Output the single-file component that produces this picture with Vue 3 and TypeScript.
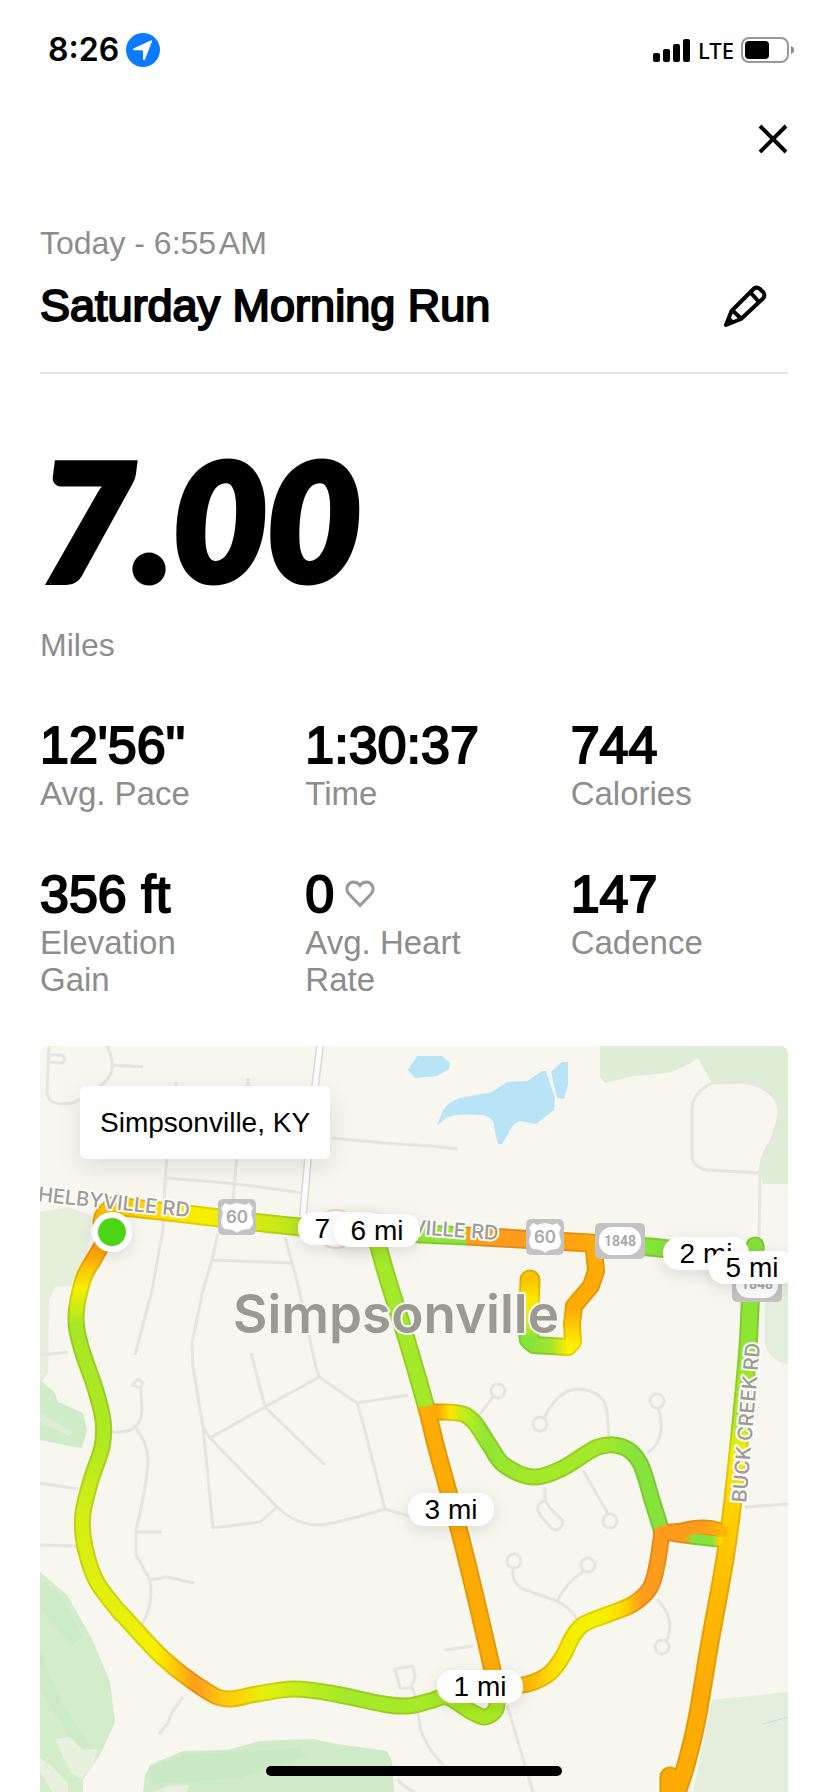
<script setup lang="ts">
type Point = [number, number]
type Stop = [number, string]

interface Segment {
  id: string
  points: Point[]
  axis: 'x' | 'y'
  stops: Stop[]
  width: number
  straight?: boolean
}

interface Stat {
  value: string
  label: string
  heart?: boolean
}

interface Pin {
  label: string
  x: number
  y: number
}

const stats: Stat[] = [
  { value: "12'56''", label: 'Avg. Pace' },
  { value: '1:30:37', label: 'Time' },
  { value: '744', label: 'Calories' },
  { value: '356 ft', label: 'Elevation Gain' },
  { value: '0', label: 'Avg. Heart Rate', heart: true },
  { value: '147', label: 'Cadence' },
]

const pins: Pin[] = [
  { label: '7 mi', x: 341, y: 1229 },
  { label: '6 mi', x: 377, y: 1231 },
  { label: '2 mi', x: 706, y: 1254 },
  { label: '5 mi', x: 752, y: 1268 },
  { label: '3 mi', x: 451, y: 1510 },
  { label: '1 mi', x: 480, y: 1687 },
]

const GREEN = '#a4e929'
const BRIGHT = '#86e33b'
const LIME = '#c2ee1c'
const YELLOW = '#f6f000'
const GOLD = '#ffd400'
const ORANGE = '#ffab05'
const DEEP = '#ff9c1c'

const segments: Segment[] = [
  {
    id: 'west', axis: 'y', width: 17,
    points: [[104, 1242], [94, 1259], [83, 1280], [76, 1317], [81, 1347], [95, 1388], [103, 1420], [102, 1447], [91, 1480], [83, 1513], [83, 1535], [88, 1559], [98, 1584], [121, 1614]],
    stops: [[1242, DEEP], [1258, ORANGE], [1288, YELLOW], [1325, '#a8e626'], [1440, '#aeea22'], [1510, '#d2ee14'], [1614, '#e6f00c']],
  },
  {
    id: 'south', axis: 'x', width: 17,
    points: [[120, 1612], [163, 1658], [205, 1690], [227, 1699], [257, 1694], [293, 1689], [330, 1693], [383, 1704], [407, 1706], [430, 1701], [447, 1697], [470, 1711], [485, 1717], [496, 1709], [497, 1692]],
    stops: [[120, '#e6f00c'], [155, YELLOW], [170, GOLD], [195, DEEP], [222, '#ffc810'], [240, GOLD], [262, '#e6f00c'], [300, LIME], [345, GREEN], [500, '#aaea22']],
  },
  {
    id: 'corner', axis: 'y', width: 17,
    points: [[118, 1207], [107, 1210], [101, 1221], [104, 1240]],
    stops: [[1205, '#f9c400'], [1240, DEEP]],
  },
  {
    id: 'shelbyville', axis: 'x', width: 19,
    points: [[112, 1206], [160, 1211], [300, 1227], [380, 1232], [467, 1236], [590, 1243], [650, 1247], [690, 1252], [755, 1262]],
    stops: [[112, '#f9c400'], [170, '#ffe200'], [205, YELLOW], [250, '#dcec0c'], [300, '#b4e620'], [380, GREEN], [466, BRIGHT], [467, DEEP], [540, DEEP], [600, ORANGE], [640, ORANGE], [641, BRIGHT], [760, BRIGHT]],
  },
  {
    id: 'spur-a', axis: 'y', width: 18, straight: true,
    points: [[594, 1250], [596, 1271], [591, 1286], [574, 1306], [572, 1324], [573, 1342], [568, 1347]],
    stops: [[1250, ORANGE], [1308, ORANGE], [1345, '#ffee00']],
  },
  {
    id: 'spur-b', axis: 'x', width: 18, straight: true,
    points: [[568, 1347], [534, 1345], [528, 1340]],
    stops: [[528, BRIGHT], [550, '#9fe52e'], [568, '#ffee00']],
  },
  {
    id: 'spur-c', axis: 'y', width: 21, straight: true,
    points: [[529, 1338], [529, 1310], [530, 1280]],
    stops: [[1280, '#f8c400'], [1298, '#ffe600'], [1318, '#e6ee0c'], [1338, BRIGHT]],
  },
  {
    id: 'diagonal', axis: 'y', width: 18,
    points: [[378, 1245], [388, 1280], [408, 1344], [427, 1410], [437, 1450], [460, 1534], [477, 1603], [497, 1690]],
    stops: [[1245, GREEN], [1405, GREEN], [1409, ORANGE], [1690, ORANGE]],
  },
  {
    id: 'east', axis: 'y', width: 19,
    points: [[755, 1248], [751, 1290], [748, 1347], [742, 1413], [733, 1500], [725, 1559], [710, 1642], [697, 1719], [686, 1765], [676, 1795]],
    stops: [[1245, BRIGHT], [1340, '#90e532'], [1425, '#b4ea20'], [1450, '#f0ee04'], [1490, '#ffd800'], [1600, '#ffb800'], [1700, ORANGE]],
  },
  {
    id: 'connector', axis: 'x', width: 17,
    points: [[429, 1412], [445, 1412], [463, 1414], [475, 1423], [490, 1446], [504, 1465], [533, 1477], [563, 1468], [598, 1447], [623, 1447], [640, 1463], [652, 1500], [661, 1529]],
    stops: [[427, ORANGE], [438, ORANGE], [450, '#ffe400'], [464, LIME], [485, '#92e534'], [530, GREEN], [605, GREEN], [635, BRIGHT], [661, BRIGHT]],
  },
  {
    id: 'link-low', axis: 'x', width: 13,
    points: [[664, 1534], [692, 1538], [719, 1541]],
    stops: [[664, DEEP], [684, DEEP], [694, BRIGHT], [712, BRIGHT], [720, GOLD]],
  },
  {
    id: 'link', axis: 'x', width: 16,
    points: [[661, 1532], [678, 1531], [695, 1528], [710, 1528], [722, 1531]],
    stops: [[661, DEEP], [700, DEEP], [722, '#ffb40a']],
  },
  {
    id: 'return', axis: 'x', width: 17,
    points: [[662, 1532], [657, 1565], [650, 1588], [633, 1604], [609, 1614], [584, 1624], [573, 1636], [563, 1656], [550, 1673], [531, 1683], [510, 1687]],
    stops: [[510, ORANGE], [535, '#ffbe08'], [555, '#ffe000'], [572, '#f2f000'], [605, '#f6f000'], [625, GOLD], [642, DEEP], [662, DEEP]],
  },
]

/* Catmull-Rom spline through the points, written as cubic segments. */
function trace(points: Point[], straight = false): string {
  let d = `M${points[0][0]} ${points[0][1]}`
  for (let i = 0; i < points.length - 1; i++) {
    const b = points[i]
    const c = points[i + 1]
    if (straight) {
      d += `L${c[0]} ${c[1]}`
      continue
    }
    const a = points[i - 1] ?? b
    const e = points[i + 2] ?? c
    const p = [b[0] + (c[0] - a[0]) / 6, b[1] + (c[1] - a[1]) / 6]
    const q = [c[0] - (e[0] - b[0]) / 6, c[1] - (e[1] - b[1]) / 6]
    d += `C${p[0].toFixed(1)} ${p[1].toFixed(1)} ${q[0].toFixed(1)} ${q[1].toFixed(1)} ${c[0]} ${c[1]}`
  }
  return d
}

const route = segments.map((s) => {
  const lo = s.stops[0][0]
  const hi = s.stops[s.stops.length - 1][0]
  return {
    id: s.id,
    width: s.width,
    d: trace(s.points, s.straight),
    x1: s.axis === 'x' ? lo : 0,
    x2: s.axis === 'x' ? hi : 0,
    y1: s.axis === 'y' ? lo : 0,
    y2: s.axis === 'y' ? hi : 0,
    stops: s.stops.map(([at, color]) => ({ offset: (at - lo) / (hi - lo), color })),
  }
})

const streets: string[] = [
  'M49 1046L47 1092Q48 1104 62 1104Q74 1104 80 1099M107 1046Q116 1066 110 1075Q106 1082 98 1088M112 1065L143 1067M49 1055L62 1055Q68 1059 62 1063L49 1062',
  'M176 1082V1090M248 1078V1090M167 1155L165 1183L163 1230L152 1290L135 1355M237 1155L233 1200M167 1178L237 1184L303 1193',
  'M332 1138L383 1143L430 1146L458 1149',
  'M218 1233L212 1260L203 1290L192 1343L193 1367L203 1427L213 1528L260 1522L277 1507M212 1260L292 1263M285 1237L292 1263L298 1285L315 1363L319 1377L357 1403L363 1423L385 1509',
  'M203 1427L210 1438L277 1507Q297 1526 322 1525Q345 1521 385 1509L412 1517M210 1438L265 1407L319 1377M251 1353L265 1407L325 1465M357 1403L408 1395',
  'M112 1432Q128 1433 135 1427Q142 1420 142 1410L141 1388L132 1385L138 1379L143 1383L141 1388M135 1427Q149 1445 148 1462Q146 1490 136 1530V1555L150 1580Q154 1605 142 1624M136 1532H162M150 1580L167 1577L194 1583',
  'M40 1355L68 1352M40 1483L78 1489M40 1545L78 1546',
  'M183 1697L172 1712L168 1723L159 1734',
  'M395 1669L413 1666L415 1677L411 1688H400ZM413 1688L419 1719Q420 1740 443 1765M397 1779Q404 1788 415 1792',
  'M507 1705L533 1792M445 1650L473 1646',
  'M513 1568Q511 1583 523 1589L557 1601Q569 1607 577 1619M584 1571Q567 1582 557 1601M666 1642Q677 1620 657 1599',
  'M493 1397L480 1414M544 1418Q558 1389 579 1389Q605 1391 607 1412L609 1437M658 1407Q668 1440 647 1453',
  'M545 1487V1500M545 1500Q534 1505 540 1515L552 1529Q562 1532 563 1521L550 1508ZM583 1470L608 1514',
  'M745 1507L788 1504',
  'M759 1242L760 1173L707 1170Q692 1167 692 1155V1107Q694 1092 712 1083L745 1082Q779 1090 779 1112Q778 1125 770 1143Q761 1155 760 1173',
]

const culDeSacs: Point[] = [[514, 1561], [588, 1565], [662, 1647], [498, 1391], [540, 1424], [657, 1401], [610, 1521]]
</script>

<template>
  <div class="screen">
    <div class="status">
      <div class="status-side">
        <span class="clock">8:26</span>
        <svg class="location" viewBox="0 0 34 34" aria-hidden="true">
          <circle cx="17" cy="17" r="17" fill="#0a7bff" />
          <path d="M26 8.500L19 26.500Q17.800 28 17 26V18.200Q16.800 17.200 15.900 17.200H7.800Q6 16.500 7.600 15.400L24.600 7.600Q26.600 7 26 8.500Z" fill="#fff" />
        </svg>
      </div>
      <div class="status-side">
        <svg class="signal" viewBox="0 0 38 24" aria-hidden="true">
          <rect x="0" y="15" width="7" height="9" rx="2" />
          <rect x="10" y="11" width="7" height="13" rx="2" />
          <rect x="20" y="6" width="7" height="18" rx="2" />
          <rect x="30" y="1" width="7" height="23" rx="2" />
        </svg>
        <span class="network">LTE</span>
        <svg class="battery" viewBox="0 0 54 26" aria-hidden="true">
          <rect x="1" y="1" width="46" height="24" rx="7" fill="none" stroke="#999" stroke-width="2" />
          <rect x="4" y="4" width="24" height="18" rx="4" />
          <path d="M50 9Q53 10 53 13T50 17Z" fill="#8c8c8c" />
        </svg>
      </div>
    </div>

    <main class="content">
      <div class="toolbar">
        <button class="icon-button" type="button" aria-label="Close">
          <svg class="close" viewBox="0 0 30 30"><path d="M2 2L28 28M28 2L2 28" /></svg>
        </button>
      </div>

      <header class="header">
        <div>
          <p class="date">Today - 6:55&#8202;AM</p>
          <h1 class="title">Saturday Morning Run</h1>
        </div>
        <button class="icon-button edit" type="button" aria-label="Edit name">
          <svg class="pencil" viewBox="722 284 46 46">
            <path d="M726 325L731.500 311L754 288.500Q757 286.500 760 289L763.500 292.500Q765.500 295.500 763 298.500L741 319ZM750.500 292.500L759 302M732 310L741 318.500M729 319L733 323" />
          </svg>
        </button>
      </header>

      <section>
        <div class="distance">7.00</div>
        <p class="unit">Miles</p>
      </section>

      <dl class="stats">
        <div v-for="s in stats" :key="s.label" class="stat">
          <dd class="value">
            {{ s.value }}
            <svg v-if="s.heart" class="heart" viewBox="0 0 30 28" aria-hidden="true">
              <path d="M15 25.500L4 14C-1 8 4 2 8.500 2Q12.500 2 15 5.500Q17.500 2 21.500 2C26 2 31 8 26 14Z" />
            </svg>
          </dd>
          <dt class="label">{{ s.label }}</dt>
        </div>
      </dl>

      <section class="map">
        <svg class="map-canvas" viewBox="40 1046 748 746" role="img" aria-label="Route map">
          <defs>
            <linearGradient
              v-for="r in route" :id="r.id" :key="r.id" gradientUnits="userSpaceOnUse"
              :x1="r.x1" :x2="r.x2" :y1="r.y1" :y2="r.y2"
            >
              <stop v-for="(s, i) in r.stops" :key="i" :offset="s.offset" :stop-color="s.color" />
            </linearGradient>
            <filter id="lift" x="-30%" y="-50%" width="160%" height="220%">
              <feDropShadow dx="0" dy="4" stdDeviation="8" flood-color="#000" flood-opacity="0.11" />
            </filter>
          </defs>

          <rect x="40" y="1046" width="748" height="746" fill="#f7f6ef" />

          <g fill="#deedd5">
            <path d="M600 1046V1077L605 1083L633 1076L668 1073Q682 1069 698 1058L712 1083L745 1082Q779 1090 779 1112Q778 1125 770 1143Q761 1155 761 1173L763 1184H788V1046Z" />
            <path d="M765 1284V1345Q770 1360 788 1365V1284Z" fill="#e4eedd" />
            <path d="M712 1700L788 1692V1792H693Z" fill="#e5eedc" />
            <path d="M40 1212L68 1207L92 1216L87 1258L72 1286L55 1287L49 1300L48 1373L40 1384Z" fill="#e6efdc" />
          </g>
          <path d="M40 1380L55 1393L58 1402L83 1413L87 1430L82 1448L70 1446L40 1440Z" fill="#cdecc7" />
          <path d="M40 1414L74 1432L69 1436L40 1422Z" fill="#deeed6" />
          <path d="M40 1572L67 1595L92 1639L110 1682L115 1722L100 1755L83 1779V1792H40Z" fill="#d3ecca" />
          <path d="M40 1580L62 1597L82 1636L72 1646L40 1608ZM40 1650L60 1700L90 1746L78 1750L40 1690Z" fill="#cdeac7" />
          <path d="M55 1739L70 1737L83 1750L98 1749L92 1768L81 1779L70 1772ZM40 1758L54 1768L68 1784V1792H52L40 1772Z" fill="#e8f0de" />
          <path d="M143 1792L145 1776L150 1765L183 1751L227 1750L260 1741L313 1739L337 1744L387 1751L392 1762L394 1792Z" fill="#d0ebc8" />
          <path d="M150 1767L183 1755L300 1748L306 1756L240 1778L152 1784Z" fill="#c9e8c4" />
          <path d="M154 1792L168 1786L190 1785L186 1792Z" fill="#e8f0de" />

          <g fill="#b8e4f5">
            <path d="M437 1126L443 1110Q450 1101 460 1098L492 1092L507 1082L527 1081L542 1071L546 1071L555 1098L554 1110L536 1124L520 1121Q512 1124 508 1134L502 1144H498L494 1127Q494 1117 482 1115Q455 1113 446 1118Z" />
            <path d="M551 1072L562 1062H568V1085L564 1099L557 1098Z" />
            <path d="M408 1070L417 1056H442L450 1063L449 1069L437 1076L415 1078Z" />
          </g>
          <path d="M763 1724L788 1717" fill="none" stroke="#b8dff0" />

          <g class="streets">
            <path v-for="d in streets" :key="d" :d="d" />
            <circle v-for="c in culDeSacs" :key="c.join()" :cx="c[0]" :cy="c[1]" r="7" />
          </g>
          <path class="avenue-edge" d="M320 1046L315 1087L308 1158L303 1216" />
          <path class="avenue" d="M320 1046L315 1087L308 1158L303 1216" />

          <g class="route">
            <path v-for="r in route" :key="r.id" :d="r.d" :stroke="`url(#${r.id})`" :stroke-width="r.width" />
            <path d="M755 1246V1248" stroke="#86e33b" stroke-width="19" />
            <path d="M670 1777V1792" stroke="#ffab05" stroke-width="21" />
          </g>
          <g class="route shade">
            <path v-for="r in route" :key="r.id" :d="r.d" :stroke-width="r.width" />
            <path d="M755 1246V1248" stroke-width="19" />
            <path d="M670 1777V1792" stroke-width="21" />
          </g>
          <g class="route">
            <path v-for="r in route" :key="r.id" :d="r.d" :stroke="`url(#${r.id})`" :stroke-width="r.width - 4" />
            <path d="M755 1246V1248" stroke="#86e33b" stroke-width="15" />
            <path d="M670 1777V1792" stroke="#ffab05" stroke-width="17" />
          </g>

          <g class="road-name">
            <text text-anchor="end" transform="translate(189 1217) rotate(6)">SHELBYVILLE RD</text>
            <text text-anchor="end" transform="translate(498 1240) rotate(4)">SHELBYVILLE RD</text>
            <text transform="translate(746 1503) rotate(-85)">BUCK CREEK RD</text>
          </g>
          <text class="town" x="396" y="1333">Simpsonville</text>

          <g class="shield">
            <g v-for="p in [[237, 1217], [545, 1237]]" :key="p[0]" :transform="`translate(${p[0]} ${p[1]})`">
              <rect x="-19" y="-18" width="38" height="36" rx="5" />
              <path d="M-12 -14Q-8 -11 -5 -13L0 -14L5 -13Q8 -11 12 -14L16 -9Q13 -5 15 0Q18 8 12 12Q4 12 0 16Q-4 12 -12 12Q-18 8 -15 0Q-13 -5 -16 -9Z" />
              <text class="us" y="6">60</text>
            </g>
            <g v-for="p in [[620, 1241], [757, 1284]]" :key="p[0]" :transform="`translate(${p[0]} ${p[1]})`">
              <rect x="-25" y="-18" width="50" height="36" rx="5" />
              <rect class="plate" x="-21" y="-14" width="42" height="28" rx="13" />
              <text class="state" y="5">1848</text>
            </g>
          </g>

          <circle cx="112" cy="1232" r="20" fill="#fff" filter="url(#lift)" />
          <circle cx="112" cy="1232" r="14" fill="#4bd515" />
          <circle cx="336" cy="1229" r="19" fill="#fff" stroke="#f3d3d3" stroke-width="2" />

          <g v-for="p in pins" :key="p.label" class="pin" :transform="`translate(${p.x} ${p.y})`">
            <rect x="-43" y="-17" width="86" height="33" rx="16" filter="url(#lift)" />
            <text y="9">{{ p.label }}</text>
          </g>
        </svg>
        <div class="place">Simpsonville, KY</div>
      </section>
    </main>
    <div class="home-bar"></div>
  </div>
</template>

<style>
body {
  margin: 0;
  background: #fff;
}
</style>

<style scoped>
.screen {
  position: relative;
  min-height: 100vh;
  background: #fff;
  color: #000;
  font-family: "Liberation Sans", Arial, sans-serif;
}

p,
h1,
dl,
dd {
  margin: 0;
}

.status {
  display: flex;
  align-items: center;
  justify-content: space-between;
  height: 100px;
  padding: 0 33px 0 48px;
}

.status-side {
  display: flex;
  align-items: center;
  gap: 7px;
}

.clock {
  font: 600 32px/40px Inter, sans-serif;
}

.location {
  width: 34px;
  height: 34px;
}

.signal {
  width: 38px;
  height: 24px;
}

.network {
  font: 500 22px/32px "Noto Sans", sans-serif;
}

.battery {
  width: 54px;
  height: 26px;
}

.content {
  padding: 0 40px;
}

.toolbar {
  display: flex;
  align-items: center;
  justify-content: flex-end;
  height: 78px;
}

.icon-button {
  display: flex;
  padding: 0;
  border: 0;
  background: none;
  color: inherit;
  cursor: pointer;
}

.close {
  width: 30px;
  height: 30px;
  fill: none;
  stroke: currentColor;
  stroke-width: 4;
}

.header {
  display: flex;
  align-items: flex-end;
  justify-content: space-between;
  margin-top: 45px;
  padding-bottom: 40px;
  border-bottom: 2px solid #e4e4e4;
}

.date,
.unit {
  color: #8d8d8d;
  font-size: 32px;
  line-height: 40px;
}

.title {
  margin-top: 17px;
  font-size: 45px;
  font-weight: 400;
  line-height: 52px;
  -webkit-text-stroke: 2px currentColor;
}

.edit {
  margin: 0 20px 2px 0;
}

.pencil {
  width: 46px;
  height: 46px;
  fill: none;
  stroke: currentColor;
  stroke-width: 4;
  stroke-linejoin: round;
}

.distance {
  margin-top: 60px;
  font-family: Lato, sans-serif;
  font-size: 162px;
  font-style: italic;
  font-weight: 900;
  line-height: 170px;
  -webkit-text-stroke: 7px currentColor;
}

.unit {
  margin-top: 21px;
}

.stats {
  display: grid;
  grid-template-columns: repeat(3, 1fr);
  gap: 52px 48px;
  margin-top: 50px;
}

.stat {
  display: flex;
  flex-direction: column;
}

.value {
  display: flex;
  align-items: center;
  gap: 11px;
  font-size: 52px;
  line-height: 60px;
  -webkit-text-stroke: 2px currentColor;
}

.heart {
  width: 30px;
  height: 28px;
  fill: none;
  stroke: #999;
  stroke-width: 3;
}

.label {
  padding-right: 16px;
  color: #8d8d8d;
  font-size: 33px;
  line-height: 37px;
}

.map {
  position: relative;
  margin-top: 48px;
  overflow: hidden;
  border-radius: 8px 8px 0 0;
}

.map-canvas {
  display: block;
  width: 100%;
}

.place {
  position: absolute;
  top: 40px;
  left: 40px;
  padding: 0 20px;
  border-radius: 6px;
  background: #fff;
  box-shadow: 0 8px 24px rgba(0, 0, 0, 0.1);
  font-size: 28px;
  line-height: 73px;
}

.streets {
  fill: none;
  stroke: #e6e5df;
  stroke-width: 3;
  stroke-linejoin: round;
}

.avenue-edge,
.avenue {
  fill: none;
  stroke: #dadad6;
  stroke-width: 8;
}

.avenue {
  stroke: #fff;
  stroke-width: 5;
}

.route {
  fill: none;
  stroke-linecap: round;
  stroke-linejoin: round;
}

.shade {
  opacity: 0.14;
  stroke: #403000;
}

.road-name {
  fill: #9b9b98;
  stroke: #fbfaf5;
  stroke-width: 4;
  stroke-linejoin: round;
  paint-order: stroke;
  font: 500 20px Inter, sans-serif;
}

.town {
  fill: #9b9994;
  stroke: #f7f6ef;
  stroke-width: 4;
  stroke-linejoin: round;
  paint-order: stroke;
  font: 600 53px Inter, sans-serif;
  text-anchor: middle;
}

.shield rect {
  fill: #c3c3c3;
}

.shield path,
.shield .plate {
  fill: #fff;
}

.shield text {
  fill: #a9a9a9;
  text-anchor: middle;
}

.us {
  font: 600 17px Inter, sans-serif;
}

.state {
  font: 700 14px Roboto, sans-serif;
}

.pin rect {
  fill: #fff;
}

.pin text {
  font-size: 28px;
  text-anchor: middle;
}

.home-bar {
  position: absolute;
  bottom: 16px;
  left: 50%;
  width: 296px;
  height: 10px;
  margin-left: -148px;
  border-radius: 5px;
  background: #000;
}
</style>
